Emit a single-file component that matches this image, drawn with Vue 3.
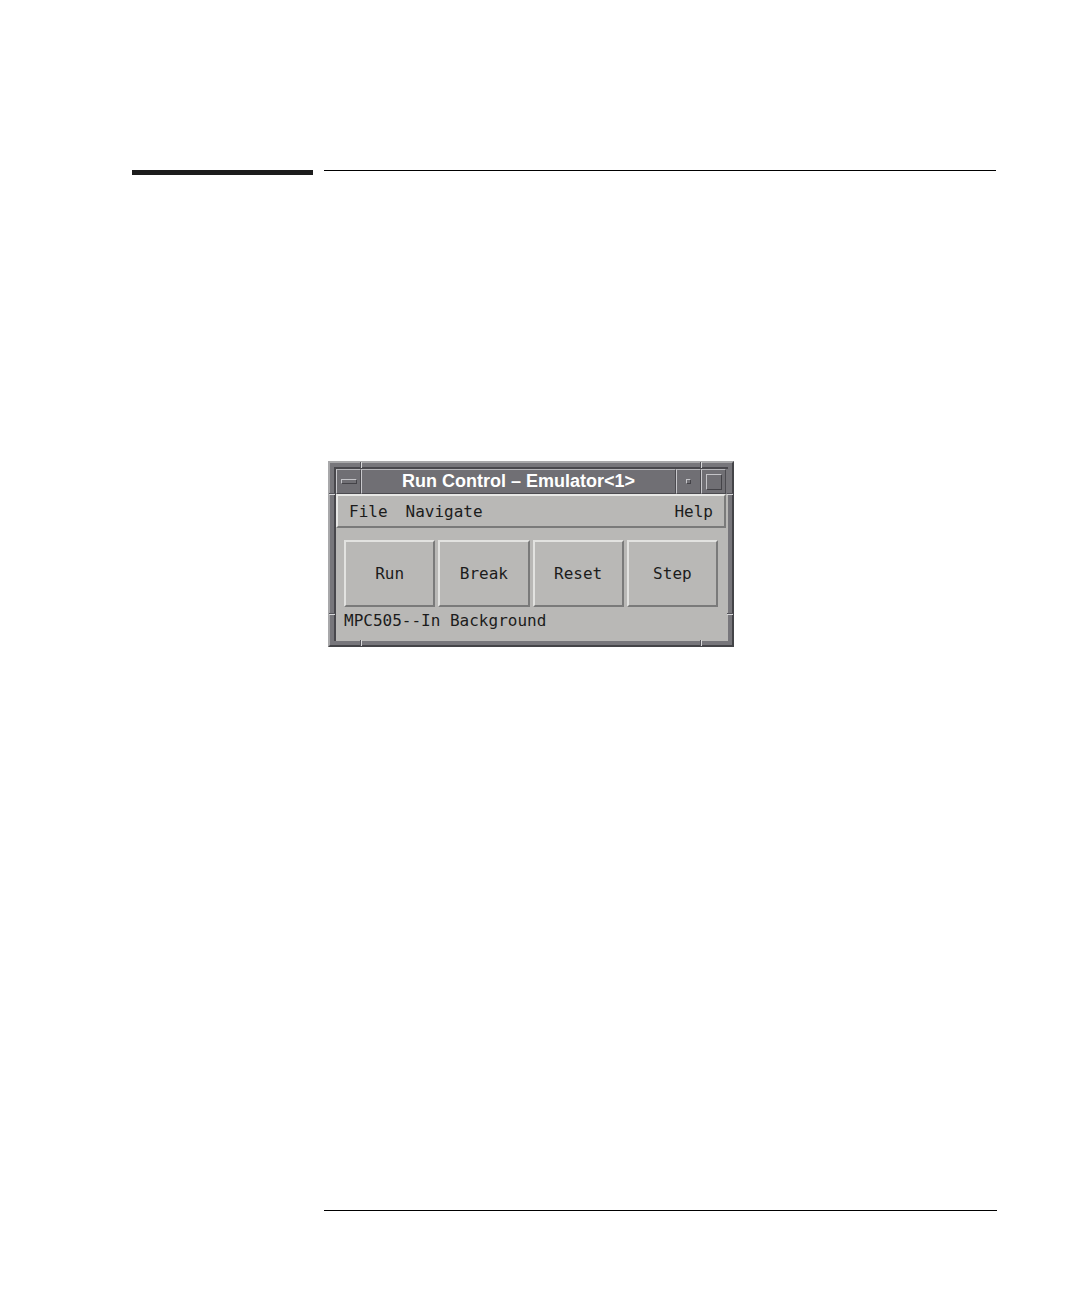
<script setup>
const menus = ['File', 'Navigate', 'Help']
const actions = ['Run', 'Break', 'Reset', 'Step']
</script>

<template>
  <main class="page">
    <header class="rules">
      <div class="thick"></div>
      <div class="thin"></div>
    </header>

    <section class="window" aria-label="Run Control">
      <div class="inner">
        <div class="titlebar">
          <button class="ctl" aria-label="Window menu"><span class="glyph dash"></span></button>
          <h1 class="title">Run Control – Emulator&lt;1&gt;</h1>
          <button class="ctl" aria-label="Minimize"><span class="glyph dot"></span></button>
          <button class="ctl" aria-label="Maximize"><span class="glyph square"></span></button>
        </div>
        <div class="client">
          <nav class="menubar">
            <button v-for="m in menus" :key="m" class="menu">{{ m }}</button>
          </nav>
          <div class="actions">
            <button v-for="a in actions" :key="a" class="action">{{ a }}</button>
          </div>
          <p class="status">MPC505--In Background</p>
        </div>
      </div>
      <span class="tick v top left"></span>
      <span class="tick v top right"></span>
      <span class="tick v bottom left"></span>
      <span class="tick v bottom right"></span>
      <span class="tick h top left"></span>
      <span class="tick h top right"></span>
      <span class="tick h bottom left"></span>
      <span class="tick h bottom right"></span>
    </section>

    <footer class="foot"></footer>
  </main>
</template>

<style>
body {
  margin: 0;
  background: #fff;
}
</style>

<style scoped>
.page {
  box-sizing: border-box;
  min-height: 100vh;
  padding: 170px 83px 85px 132px;
  display: flex;
  flex-direction: column;
  font-family: "DejaVu Sans Mono", monospace;
  font-size: 16px;
  color: #1c1c1c;
}

button {
  font: inherit;
  color: inherit;
  margin: 0;
  padding: 0;
  border: 0;
  background: none;
}

.rules {
  display: grid;
  grid-template-columns: 181px 1fr;
  column-gap: 11px;
  margin-right: 1px;
}

.thick {
  height: 5px;
  background: #1c1c1c;
}

.thin {
  height: 1px;
  background: #000;
}

.window {
  position: relative;
  box-sizing: border-box;
  width: 406px;
  max-width: 100%;
  margin: 286px 0 48px 196px;
  border: 2px solid;
  border-color: #a8a8aa #444448 #444448 #a8a8aa;
  background: #77767b;
  padding: 4px;
}

.inner {
  border: 2px solid;
  border-color: #48474c;
  border-right-width: 0;
  border-bottom-width: 0;
}

.titlebar {
  display: flex;
  height: 25px;
  margin-right: 2px;
  background: #706f74;
  color: #fff;
}

.ctl,
.title {
  box-sizing: border-box;
  border: 1px solid;
  border-color: #b4b4b8 #4c4b50 #4c4b50 #c8c8cc;
}

.ctl {
  width: 25px;
  display: flex;
  align-items: center;
  justify-content: center;
}

.title {
  flex: 1;
  margin: 0;
  text-align: center;
  white-space: nowrap;
  font: bold 18px/23px "Liberation Sans", Arial, sans-serif;
}

.glyph {
  box-sizing: border-box;
  border: 1px solid;
  border-color: #c4c4c8 #444348 #444348 #c4c4c8;
}

.dash {
  width: 16px;
  height: 5px;
}

.dot {
  width: 5px;
  height: 5px;
}

.square {
  width: 16px;
  height: 16px;
}

.client {
  background: #b9b8b6;
  padding-bottom: 9px;
}

.menubar {
  display: flex;
  align-items: center;
  gap: 18px;
  height: 30px;
  margin-right: 2px;
  padding: 0 11px;
  border: 2px solid;
  border-color: #e8e8e6 #7a7a7a #7a7a7a #e8e8e6;
}

.menu:last-child {
  margin-left: auto;
}

.actions {
  display: grid;
  grid-template-columns: repeat(4, 1fr);
  gap: 3px;
  padding: 12px 10px 0 8px;
}

.action {
  height: 67px;
  border: 2px solid;
  border-color: #e2e2e0 #7a7a7a #7a7a7a #e2e2e0;
}

.status {
  margin: 4px 8px 1px;
  line-height: 20px;
}

.tick {
  position: absolute;
  box-sizing: border-box;
}

.tick.v {
  width: 2px;
  height: 6px;
  border-left: 1px solid #55545a;
  background: #d8d8da;
}

.tick.h {
  width: 6px;
  height: 2px;
  border-top: 1px solid #55545a;
  background: #d8d8da;
}

.v.top {
  top: -1px;
}

.v.bottom {
  bottom: -1px;
}

.v.left {
  left: 30px;
}

.v.right {
  right: 30px;
}

.h.left {
  left: -1px;
}

.h.right {
  right: -1px;
}

.h.top {
  top: 30px;
}

.h.bottom {
  bottom: 30px;
}

.foot {
  height: 1px;
  margin-top: auto;
  margin-left: 192px;
  background: #000;
}
</style>
